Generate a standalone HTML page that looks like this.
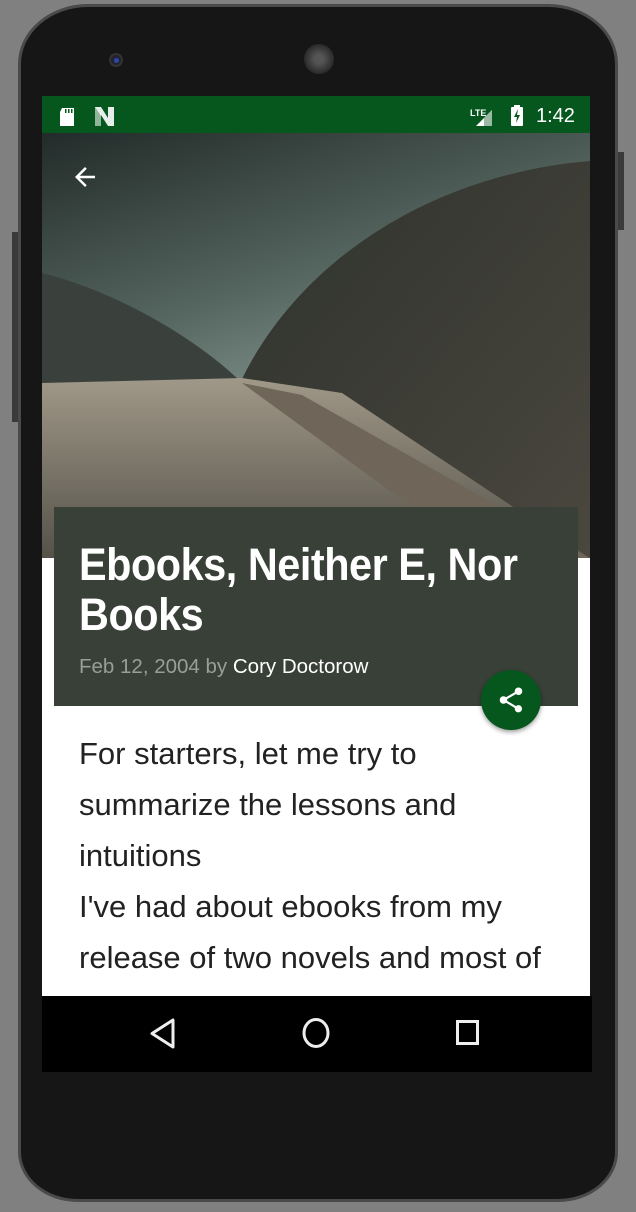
<!DOCTYPE html>
<html><head><meta charset="utf-8"><style>
*{margin:0;padding:0;box-sizing:border-box}
body{width:636px;height:1212px;background:#808080;position:relative;overflow:hidden;font-family:"Liberation Sans",sans-serif}
.phone{position:absolute;left:18px;top:4px;width:600px;height:1198px;background:#161616;border-radius:70px 70px 60px 60px/60px 60px 50px 50px;border:3px solid #4a4a4a}
.btn{position:absolute;background:#3a3a3a}
.screen{position:absolute;left:42px;top:96px;width:548px;height:976px;background:#fff;overflow:hidden}
.status{position:absolute;left:0;top:0;width:548px;height:37px;background:#06571e;color:#fff}
.img{position:absolute;left:0;top:37px;width:548px;height:425px}
.card{position:absolute;left:12px;top:411px;width:524px;height:199px;background:#394038}
.title{position:absolute;left:25px;top:33px;color:#fff;font-weight:bold;font-size:45px;line-height:50px;letter-spacing:-0.5px;transform:scaleX(0.92);transform-origin:0 0;white-space:nowrap}
.meta{position:absolute;left:25px;top:148px;font-size:20.5px;color:#9a9e98}
.meta span{color:#fff}
.fab{position:absolute;left:439px;top:574px;width:60px;height:60px;border-radius:50%;background:#06571e;box-shadow:0 2px 5px rgba(0,0,0,.4)}
.body{position:absolute;left:37px;top:632px;font-size:31px;line-height:51px;color:#222;width:520px;white-space:nowrap}
.nav{position:absolute;left:42px;top:996px;width:550px;height:76px;background:#000}
</style></head><body>
<div class="phone"></div>
<div class="btn" style="left:12px;top:232px;width:6px;height:190px"></div>
<div class="btn" style="left:618px;top:152px;width:6px;height:78px"></div>
<div style="position:absolute;left:109px;top:53px;width:14px;height:14px;border-radius:50%;background:#223;border:2px solid #333"><div style="position:absolute;left:3px;top:3px;width:5px;height:5px;border-radius:50%;background:#2a4aa0"></div></div>
<div style="position:absolute;left:304px;top:44px;width:30px;height:30px;border-radius:50%;background:radial-gradient(#555 20%,#2a2a2a 70%)"></div>
<div class="screen">
<div class="status">
<svg width="548" height="37" viewBox="0 0 548 37">
<path d="M20 12h12v18h-14v-14z" fill="#fff"/><rect x="23" y="13" width="1.5" height="4" fill="#06571e"/><rect x="26" y="13" width="1.5" height="4" fill="#06571e"/><rect x="29" y="13" width="1.5" height="4" fill="#06571e"/>
<path d="M53 11h6l7 11v-11h6v19h-6l-7-11v11h-6z" fill="#fff" opacity=".9"/><path d="M53 11v19h6v-10z" fill="#8fb59a"/>
<text x="428" y="20" font-size="9" font-weight="bold" fill="#fff">LTE</text>
<path d="M434 30l16-16v16z" fill="#fff"/><path d="M442 22l8-8v16h-8z" fill="#9ab9a2"/>
<rect x="469" y="11" width="12" height="19" rx="1" fill="#fff"/><rect x="472" y="9" width="6" height="3" fill="#fff"/><path d="M476 13l-4 8h3l-1 6 4-8h-3z" fill="#06571e"/>
<text x="494" y="26" font-size="20" fill="#fff">1:42</text>
</svg></div>
<svg class="img" viewBox="0 0 548 425" preserveAspectRatio="none">
<defs>
<linearGradient id="sky" x1="0" y1="0" x2="0.4" y2="1"><stop offset="0" stop-color="#222b29"/><stop offset=".45" stop-color="#55655f"/><stop offset=".8" stop-color="#8f9e98"/></linearGradient>
<linearGradient id="rs" x1="0" y1="0" x2="1" y2="1"><stop offset="0" stop-color="#2e322d"/><stop offset="1" stop-color="#4a473e"/></linearGradient>
<linearGradient id="fl" x1="0" y1="0" x2="0" y2="1"><stop offset="0" stop-color="#a09888"/><stop offset="1" stop-color="#55524a"/></linearGradient>
</defs>
<rect width="548" height="425" fill="url(#sky)"/>
<path d="M198 250C260 120 400 40 548 28V425H200z" fill="url(#rs)"/>
<path d="M0 140C80 160 160 210 200 250L0 260z" fill="#3a403c"/>
<path d="M0 250L200 245L300 260L548 425H0z" fill="url(#fl)"/>
<path d="M200 250L260 262L548 425H440z" fill="#6f6659"/>
</svg>
<svg style="position:absolute;left:28px;top:66px" width="30" height="30" viewBox="0 0 24 24"><path d="M20 11H7.8l5.6-5.6L12 4l-8 8 8 8 1.4-1.4L7.8 13H20z" fill="#fff"/></svg>
<div class="card"><div class="title">Ebooks, Neither E, Nor<br>Books</div>
<div class="meta">Feb 12, 2004 by <span>Cory Doctorow</span></div></div>
<div class="fab"><svg style="position:absolute;left:15px;top:15px" width="30" height="30" viewBox="0 0 24 24"><path d="M18 16.1c-.8 0-1.4.3-2 .8l-7.1-4.2c.1-.2.1-.5.1-.7s0-.5-.1-.7L16 7.2c.5.5 1.2.8 2 .8 1.7 0 3-1.3 3-3s-1.3-3-3-3-3 1.3-3 3c0 .2 0 .5.1.7L8 9.8C7.5 9.3 6.8 9 6 9c-1.7 0-3 1.3-3 3s1.3 3 3 3c.8 0 1.5-.3 2-.8l7.1 4.2c-.1.2-.1.4-.1.6 0 1.6 1.3 2.900 2.9 2.9s2.9-1.3 2.9-2.9-1.2-2.9-2.8-2.9z" fill="#fff"/></svg></div>
<div class="body">For starters, let me try to<br>summarize the lessons and<br>intuitions<br>I've had about ebooks from my<br>release of two novels and most of</div>
</div>
<div class="nav"><svg width="550" height="76" viewBox="0 0 550 76">
<path d="M131 24v27l-21-13.5z" fill="none" stroke="#eee" stroke-width="3" stroke-linejoin="round"/>
<ellipse cx="274" cy="37" rx="12" ry="13.5" fill="none" stroke="#eee" stroke-width="3"/>
<rect x="415.5" y="25.5" width="20" height="22" fill="none" stroke="#eee" stroke-width="3"/>
</svg></div>
</body></html>
